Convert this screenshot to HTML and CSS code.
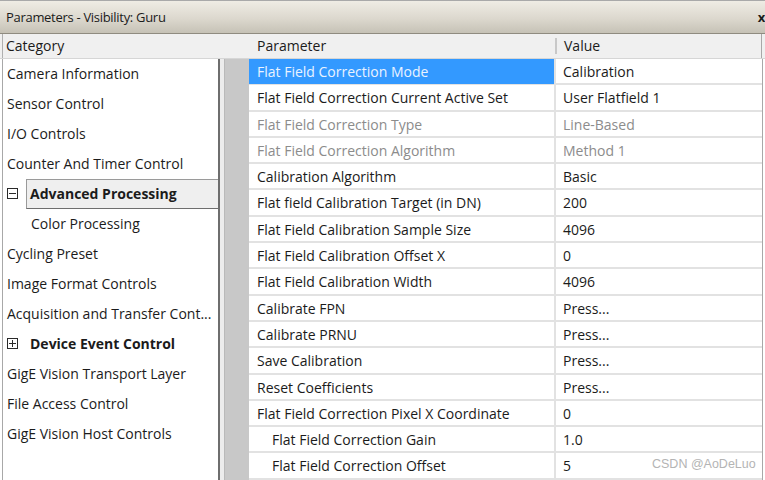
FILE: index.html
```html
<!DOCTYPE html>
<html lang="en">
<head>
    <meta charset="UTF-8">
    <meta name="viewport" content="width=device-width, initial-scale=1.0">
    <link rel="stylesheet" href="styles.css">
</head>
<body>
    <div class="window">
        <div class="titlebar">
            <span class="title">Parameters - Visibility: Guru</span>
            <span class="close">x</span>
        </div>
        <div class="heads">
            <div class="head-category">Category</div>
            <div class="head-param">Parameter</div>
            <div class="head-value">Value</div>
        </div>
        <div class="panes">
            <ul class="tree">
                <li>Camera Information</li>
                <li>Sensor Control</li>
                <li>I/O Controls</li>
                <li>Counter And Timer Control</li>
                <li class="group open selected"><span class="expander minus"></span><span class="label">Advanced Processing</span></li>
                <li class="child">Color Processing</li>
                <li>Cycling Preset</li>
                <li>Image Format Controls</li>
                <li>Acquisition and Transfer Cont...</li>
                <li class="group"><span class="expander plus"></span><span class="label">Device Event Control</span></li>
                <li>GigE Vision Transport Layer</li>
                <li>File Access Control</li>
                <li>GigE Vision Host Controls</li>
            </ul>
            <div class="splitter"></div>
            <div class="gutter"></div>
            <div class="grid">
                <div class="row selected"><div class="param">Flat Field Correction Mode</div><div class="value">Calibration</div></div>
                <div class="row"><div class="param">Flat Field Correction Current Active Set</div><div class="value">User Flatfield 1</div></div>
                <div class="row disabled"><div class="param">Flat Field Correction Type</div><div class="value">Line-Based</div></div>
                <div class="row disabled"><div class="param">Flat Field Correction Algorithm</div><div class="value">Method 1</div></div>
                <div class="row"><div class="param">Calibration Algorithm</div><div class="value">Basic</div></div>
                <div class="row"><div class="param">Flat field Calibration Target (in DN)</div><div class="value">200</div></div>
                <div class="row"><div class="param">Flat Field Calibration Sample Size</div><div class="value">4096</div></div>
                <div class="row"><div class="param">Flat Field Calibration Offset X</div><div class="value">0</div></div>
                <div class="row"><div class="param">Flat Field Calibration Width</div><div class="value">4096</div></div>
                <div class="row"><div class="param">Calibrate FPN</div><div class="value">Press...</div></div>
                <div class="row"><div class="param">Calibrate PRNU</div><div class="value">Press...</div></div>
                <div class="row"><div class="param">Save Calibration</div><div class="value">Press...</div></div>
                <div class="row"><div class="param">Reset Coefficients</div><div class="value">Press...</div></div>
                <div class="row"><div class="param">Flat Field Correction Pixel X Coordinate</div><div class="value">0</div></div>
                <div class="row sub"><div class="param">Flat Field Correction Gain</div><div class="value">1.0</div></div>
                <div class="row sub"><div class="param">Flat Field Correction Offset</div><div class="value">5</div></div>
                <div class="row"><div class="param"></div><div class="value"></div></div>
            </div>
        </div>
        <div class="watermark">CSDN @AoDeLuo</div>
    </div>
</body>
</html>
```

FILE: styles.css
```css
body {
    margin: 0;
    padding: 0;
    background-color: white;
    font-family: "Open Sans", "Noto Sans", sans-serif;
    font-size: 14px;
    color: #1b1b1b;
}
.window {
    position: relative;
    width: 765px;
    height: 480px;
    overflow: hidden;
}
.titlebar {
    display: flex;
    justify-content: space-between;
    align-items: center;
    height: 32px;
    border-top: 1px solid #a9a9a9;
    border-bottom: 1px solid #8f8b80;
    background: linear-gradient(#efece4, #dcd8ce 55%, #c6c2b6);
    padding: 0 0 0 6px;
    font-size: 13px;
    letter-spacing: -0.3px;
}
.close {
    font-weight: bold;
    font-size: 13px;
    margin-right: 0;
}
.heads {
    display: grid;
    grid-template-columns: 249px 308px 205px 3px;
    height: 24px;
    background-color: #f0f0f0;
    border-bottom: 1px solid #d6d6d6;
    align-items: center;
}
.head-category {
    padding-left: 3px;
    border-left: 1px solid #b0b0b0;
    margin-left: 2px;
    height: 24px;
    line-height: 24px;
}
.head-param {
    padding-left: 8px;
    border-right: 2px solid #c8c8c8;
    height: 16px;
    line-height: 16px;
}
.head-value {
    padding-left: 7px;
    border-right: 1px solid #a8a8a8;
    height: 24px;
    line-height: 24px;
}
.panes {
    display: flex;
    height: 422px;
}
.tree {
    list-style: none;
    margin: 0 0 0 2px;
    padding: 0;
    width: 215px;
    border-left: 1px solid #a8a8a8;
    border-right: 2px solid #6e6e6e;
    background-color: white;
}
.tree li {
    display: flex;
    align-items: center;
    height: 30px;
    padding-left: 4px;
    padding-bottom: 1px;
    box-sizing: border-box;
    white-space: nowrap;
}
.tree li.child {
    padding-left: 28px;
}
.tree li.group {
    font-weight: bold;
}
.expander {
    position: relative;
    width: 9px;
    height: 9px;
    border: 1px solid #2a2a2a;
    margin-right: 12px;
    flex: none;
}
.expander::before {
    content: "";
    position: absolute;
    left: 1px;
    top: 4px;
    width: 7px;
    height: 1px;
    background-color: #2a2a2a;
}
.expander.plus::after {
    content: "";
    position: absolute;
    left: 4px;
    top: 1px;
    width: 1px;
    height: 7px;
    background-color: #2a2a2a;
}
.tree li.selected .expander {
    margin-right: 8px;
}
.tree li.selected .label {
    flex: 1;
    height: 28px;
    line-height: 28px;
    padding-left: 3px;
    background-color: #efefef;
    border: 1px solid #9a9a9a;
    border-right: none;
    border-bottom-color: #6e6e6e;
}
.splitter {
    width: 4px;
    background-color: #ececec;
    border-right: 1px solid #b9b9b9;
}
.gutter {
    width: 24px;
    background-color: #c8c8c8;
}
.grid {
    width: 513px;
    border-right: 1px solid #a8a8a8;
    background-color: white;
}
.row {
    display: grid;
    grid-template-columns: 307px 205px;
    height: 26.3px;
    box-sizing: border-box;
    border-bottom: 2px solid #e2e2e2;
}
.param, .value {
    padding-left: 8px;
    line-height: 25px;
    white-space: nowrap;
}
.param {
    border-right: 2px solid #e2e2e2;
}
.value {
    padding-left: 7px;
}
.row.sub .param {
    padding-left: 23px;
}
.row.selected .param {
    background-color: #3399ff;
    color: #eaf3ff;
}
.row.disabled {
    color: #8c8c8c;
}
.watermark {
    position: absolute;
    left: 652px;
    top: 457px;
    color: #b4b4b4;
    font-family: "Liberation Sans", Arial, sans-serif;
    font-size: 12.5px;
}
```
